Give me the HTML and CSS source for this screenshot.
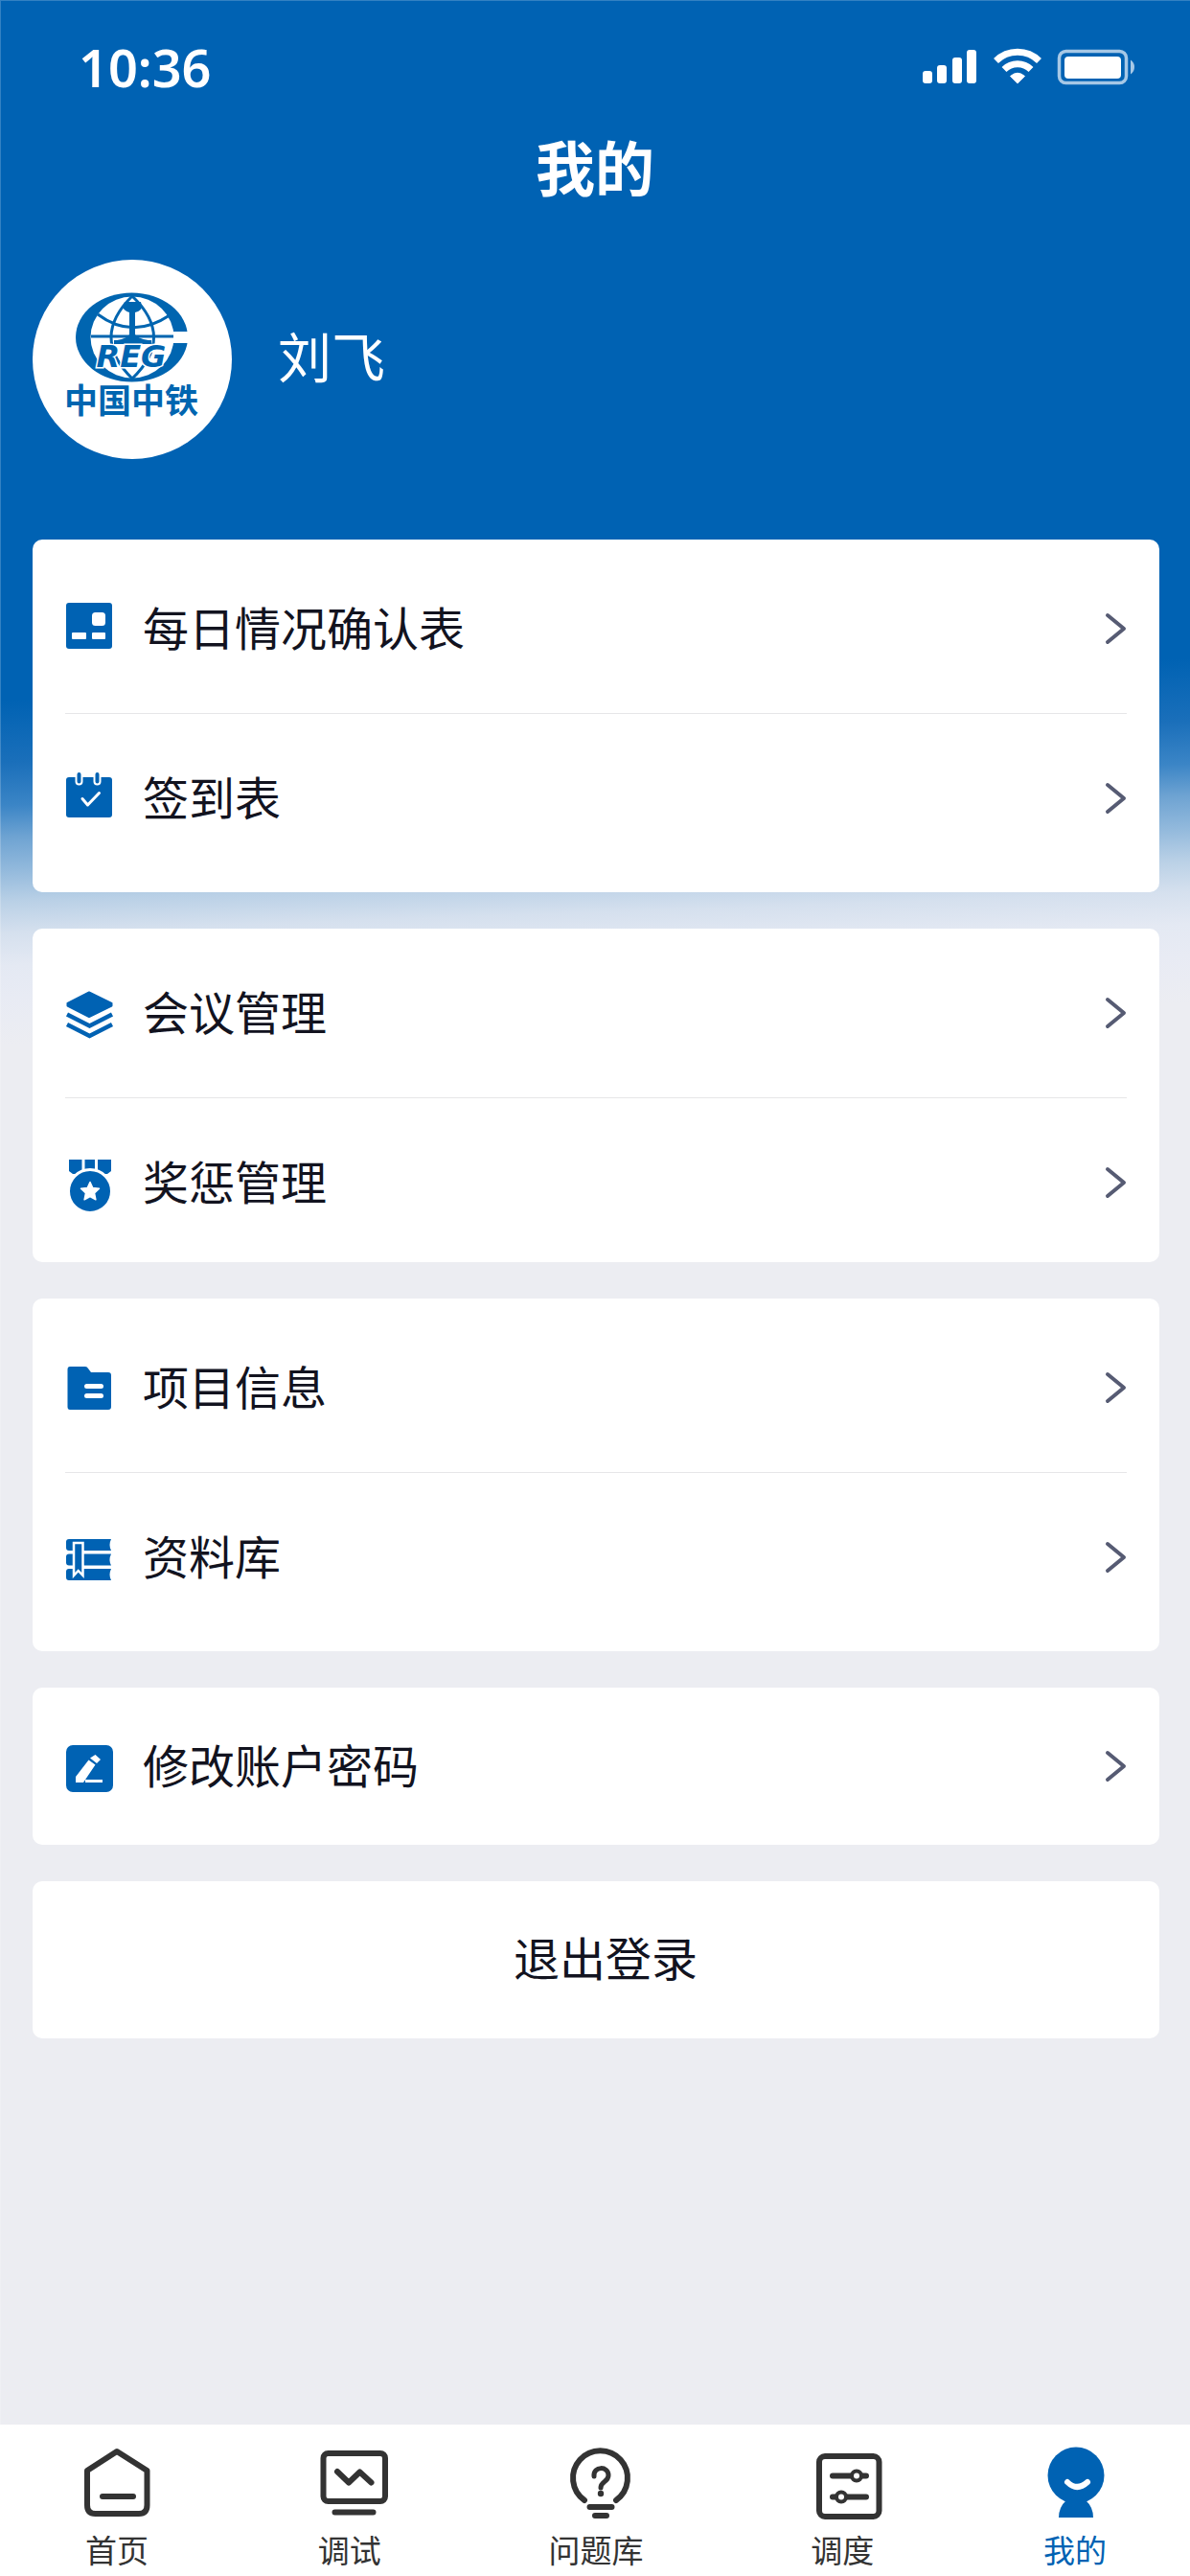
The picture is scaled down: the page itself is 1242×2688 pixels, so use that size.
FILE: index.html
```html
<!DOCTYPE html>
<html lang="zh-CN">
<head>
<meta charset="utf-8">
<meta name="viewport" content="width=device-width, initial-scale=1">
<title>我的</title>
<link rel="stylesheet" href="styles.css">
</head>
<body>
<div class="page">
  <div class="status">
    <span class="status__time">10:36</span>
    <svg class="status__icons" viewBox="0 0 222 38" aria-hidden="true">
      <g fill="#fff">
        <rect x="0" y="23" width="10" height="13" rx="3"/>
        <rect x="15" y="17" width="10" height="19" rx="3"/>
        <rect x="31" y="9" width="10" height="27" rx="3"/>
        <rect x="46" y="1" width="10" height="35" rx="3"/>
        <path d="M99 36L91.500 28.500Q99 22 106.500 28.500Z" stroke="#fff" stroke-width="1" stroke-linejoin="round"/>
        <rect x="148" y="8" width="59" height="23" rx="4"/>
      </g>
      <g fill="none" stroke="#fff" stroke-width="7">
        <path d="M76.500 12.500A32 32 0 0 1 121.500 12.500"/>
        <path d="M85 21.500A20 20 0 0 1 113 21.500"/>
      </g>
      <rect x="142.500" y="2.500" width="70" height="33" rx="7" fill="none" stroke="#a6c8e6" stroke-width="3.500"/>
      <path d="M217 11.500Q221 14 221 19T217 26.500Z" fill="#a6c8e6"/>
    </svg>
  </div>
  <h1 class="title">我的</h1>

  <section class="profile">
    <svg class="profile__avatar" viewBox="0 0 208 208" role="img" aria-label="中国中铁">
      <circle cx="104" cy="104" r="104" fill="#fff"/>
      <ellipse cx="103.500" cy="81" rx="58.500" ry="46.500" fill="#0065b0"/>
      <ellipse cx="104" cy="81" rx="43.500" ry="42.500" fill="#fff"/>
      <rect x="146" y="75" width="20" height="12" fill="#fff"/>
      <g fill="none" stroke="#0065b0" stroke-width="3">
        <path d="M61 80H147"/>
        <path d="M104 38Q60 81 104 124Q149 81 104 38"/>
        <path d="M68 57Q104 84 143 58"/>
      </g>
      <path d="M96 44H113L114 49Q114 53 107 55V78Q109 82 121 84H124V88H85V84H88Q99 82 101 78V55Q95 53 94 49Z" fill="#0065b0"/>
      <text class="logo-mark" x="103" y="112" text-anchor="middle">REG</text>
      <text class="logo-name" x="103" y="160" text-anchor="middle">中国中铁</text>
    </svg>
    <p class="profile__name">刘飞</p>
  </section>

  <main class="cards">
    <nav class="menu menu--roomy">
      <a class="row" href="#daily">
        <svg class="row__icon" viewBox="0 0 50 54" aria-hidden="true">
          <rect x="1" y="0" width="48" height="48" rx="3" fill="#0062b3"/>
          <g fill="#fff"><rect x="28" y="10" width="14" height="14" rx="3.500"/><rect x="7" y="31" width="15" height="7" rx="1"/><rect x="28" y="31" width="14" height="7" rx="1"/></g>
        </svg>
        <span class="row__label">每日情况确认表</span>
        <svg class="row__arrow" viewBox="0 0 24 36" aria-hidden="true"><path d="M4 4L21 18L4 32"/></svg>
      </a>
      <a class="row" href="#sign">
        <svg class="row__icon" viewBox="0 0 50 54" aria-hidden="true">
          <rect x="1" y="5" width="48" height="42" rx="3" fill="#0062b3"/>
          <g fill="#0062b3" stroke="#fff" stroke-width="2"><rect x="11.500" y="-1" width="6" height="13.500" rx="3"/><rect x="30.500" y="-1" width="6" height="13.500" rx="3"/></g>
          <path d="M18 27.500L23.500 34L35.500 21.500" fill="none" stroke="#fff" stroke-width="3" stroke-linecap="round" stroke-linejoin="round"/>
        </svg>
        <span class="row__label">签到表</span>
        <svg class="row__arrow" viewBox="0 0 24 36" aria-hidden="true"><path d="M4 4L21 18L4 32"/></svg>
      </a>
    </nav>

    <nav class="menu menu--compact">
      <a class="row" href="#meeting">
        <svg class="row__icon" viewBox="0 0 50 54" aria-hidden="true">
          <path d="M25 5.500L48.500 17V19.500L25 31L2.500 19.500V17Z" fill="#0062b3" stroke="#0062b3" stroke-width="2" stroke-linejoin="round"/>
          <g fill="none" stroke="#0062b3" stroke-width="4.500"><path d="M2 28.500L25.500 40.500L49 28.500"/><path d="M2 39L25.500 51L49 39"/></g>
        </svg>
        <span class="row__label">会议管理</span>
        <svg class="row__arrow" viewBox="0 0 24 36" aria-hidden="true"><path d="M4 4L21 18L4 32"/></svg>
      </a>
      <a class="row" href="#award">
        <svg class="row__icon" viewBox="0 0 50 54" aria-hidden="true">
          <path d="M4 3H17.500V18H8L4 15ZM20.500 3H31V14H20.500ZM34 3H48V15L44 18H34Z" fill="#0062b3"/>
          <circle cx="26" cy="36" r="22.500" fill="#0062b3" stroke="#fff" stroke-width="3"/>
          <path d="M26 26.500L28.800 32.500L35.500 33.200L30.500 38L31.900 44.800L26 41.500L20.100 44.800L21.500 38L16.500 33.200L23.200 32.500Z" fill="#fff" stroke="#fff" stroke-width="1.500" stroke-linejoin="round"/>
        </svg>
        <span class="row__label">奖惩管理</span>
        <svg class="row__arrow" viewBox="0 0 24 36" aria-hidden="true"><path d="M4 4L21 18L4 32"/></svg>
      </a>
    </nav>

    <nav class="menu menu--roomy">
      <a class="row" href="#project">
        <svg class="row__icon" viewBox="0 0 50 54" aria-hidden="true">
          <path d="M5 5H21Q23 5 24 7L27 11H45Q48 11 48 14V47Q48 50 45 50H5Q2.500 50 2.500 47V8Q2.500 5 5 5Z" fill="#0062b3"/>
          <g fill="#fff"><rect x="20" y="23" width="20" height="5" rx="2.500"/><rect x="20" y="33" width="20" height="5" rx="2.500"/></g>
        </svg>
        <span class="row__label">项目信息</span>
        <svg class="row__arrow" viewBox="0 0 24 36" aria-hidden="true"><path d="M4 4L21 18L4 32"/></svg>
      </a>
      <a class="row" href="#library">
        <svg class="row__icon" viewBox="0 0 50 54" aria-hidden="true">
          <g fill="#0062b3"><path d="M4 8H48Q45 14 48 20H4Q1 20 1 17V11Q1 8 4 8Z"/><path d="M4 23.500H48Q45 29.500 48 35.500H4Q1 35.500 1 32.500V26.500Q1 23.500 4 23.500Z"/><path d="M4 39H48Q45 45 48 51H4Q1 51 1 48V42Q1 39 4 39Z"/></g>
          <path d="M9 12H18.500V46L13.700 41L9 46Z" fill="#0062b3" stroke="#fff" stroke-width="2.500"/>
        </svg>
        <span class="row__label">资料库</span>
        <svg class="row__arrow" viewBox="0 0 24 36" aria-hidden="true"><path d="M4 4L21 18L4 32"/></svg>
      </a>
    </nav>

    <nav class="menu menu--single">
      <a class="row" href="#password">
        <svg class="row__icon" viewBox="0 0 50 54" aria-hidden="true">
          <rect x="1" y="5" width="49" height="49" rx="7" fill="#0062b3"/>
          <path d="M11 44V38L24.500 20.500L31.500 25.500L19 44ZM26 18.500L31.500 15L37 20L33 24Z" fill="#fff"/>
          <rect x="21" y="41" width="18" height="3" fill="#fff"/>
        </svg>
        <span class="row__label">修改账户密码</span>
        <svg class="row__arrow" viewBox="0 0 24 36" aria-hidden="true"><path d="M4 4L21 18L4 32"/></svg>
      </a>
    </nav>

    <button class="logout" type="button">退出登录</button>
  </main>

  <nav class="tabs" aria-label="主导航">
    <a class="tab" href="#home">
      <svg class="tab__icon" viewBox="0 0 70 74" aria-hidden="true">
        <path d="M35 6L66.500 26V62Q66.500 71 58 71H12.500Q4 71 4 62V26Z"/><path d="M20 53H52"/>
      </svg>
      <span>首页</span>
    </a>
    <a class="tab" href="#debug">
      <svg class="tab__icon" viewBox="0 0 70 74" aria-hidden="true">
        <rect x="7.500" y="8" width="64.500" height="50" rx="5"/><path d="M19.500 69.500H59.500M22 27L34 38.500L45.500 27.500L57.500 38.500"/>
      </svg>
      <span>调试</span>
    </a>
    <a class="tab" href="#issues">
      <svg class="tab__icon" viewBox="0 0 70 74" aria-hidden="true">
        <path d="M23 57A28.500 28.500 0 1 1 56 57M28.500 64H51.500M34 73H46"/>
        <path d="M33 32C32 21 48 21 48 31C48 38 40 37 40 44" stroke-width="5"/><circle cx="40" cy="50" r="3.200" fill="#333" stroke="none"/>
      </svg>
      <span>问题库</span>
    </a>
    <a class="tab" href="#dispatch">
      <svg class="tab__icon" viewBox="0 0 70 74" aria-hidden="true">
        <rect x="11" y="11" width="62.500" height="63" rx="6"/><path d="M25 31.500H60M25 53.500H60"/>
        <g fill="#fff" stroke-width="4"><circle cx="50" cy="31.500" r="5"/><circle cx="34" cy="53.500" r="5"/></g>
      </svg>
      <span>调度</span>
    </a>
    <a class="tab tab--active" href="#me" aria-current="page">
      <svg class="tab__icon" viewBox="0 0 70 74" aria-hidden="true">
        <g fill="#0062b3" stroke="none"><circle cx="36" cy="31" r="29.500"/><path d="M26 57Q18 64 18 75H54Q54 64 46 57Z"/></g>
        <path d="M27 38Q37 48 48 38" stroke="#fff"/>
      </svg>
      <span>我的</span>
    </a>
  </nav>
</div>
</body>
</html>
```
FILE: styles.css
```css
* {
  box-sizing: border-box;
}

body {
  margin: 0;
  font-family: "Noto Sans CJK SC", sans-serif;
  color: #12131f;
}

svg {
  display: block;
  overflow: visible;
}

a {
  color: inherit;
  text-decoration: none;
}

.page {
  display: flex;
  flex-direction: column;
  min-height: 100vh;
  background: #ecedf2 linear-gradient(178deg, #0062b3 730px, #1a6fba 795px, #3b85c6 840px, #6ea3d2 873px, #92b9dc 907px, #b9d0e6 940px, #d5e0ee 973px, #e4e9f3 1007px, #e8ebf4 1040px, #ecedf2 1090px) no-repeat 0 0 / 100% 1200px;
  box-shadow: inset 1px 1px 0 rgba(255, 255, 255, 0.2);
}

.status {
  display: flex;
  align-items: center;
  justify-content: space-between;
  height: 140px;
  padding: 0 57px 0 82px;
  color: #fff;
}

.status__time {
  font: 600 54px/72px "Noto Sans", sans-serif;
}

.status__icons {
  width: 222px;
  height: 38px;
}

.title {
  margin: 0;
  padding-bottom: 8px;
  font-size: 62px;
  font-weight: 700;
  line-height: 66px;
  text-align: center;
  color: #fff;
}

.profile {
  display: flex;
  align-items: center;
  gap: 48px;
  padding: 57px 34px 0;
}

.profile__avatar {
  width: 208px;
  height: 208px;
}

.profile__name {
  margin: 0;
  padding-bottom: 10px;
  font-size: 56px;
  line-height: 80px;
  color: #fff;
}

.logo-mark {
  font: italic bold 32px "DejaVu Sans", sans-serif;
  fill: #0065b0;
  stroke: #fff;
  stroke-width: 3px;
  paint-order: stroke;
}

.logo-name {
  font-size: 35px;
  font-weight: 700;
  fill: #0065b0;
}

.cards {
  display: flex;
  flex-direction: column;
  gap: 38px;
  flex: 1;
  padding: 84px 32px 40px 34px;
}

.menu,
.logout {
  border-radius: 10px;
  background: #fff;
}

.menu {
  padding: 0 34px;
}

.menu--roomy {
  padding-top: 5px;
  padding-bottom: 11px;
}

.row {
  display: flex;
  align-items: center;
  height: 176px;
  font-size: 48px;
  line-height: 70px;
}

.row + .row {
  border-top: 1px solid #e6e6e8;
}

.menu--compact .row + .row {
  height: 172px;
  padding-top: 4px;
}

.menu--single .row {
  height: 164px;
}

.row__icon {
  flex: none;
  width: 50px;
  height: 54px;
  margin-right: 31px;
}

.row__label {
  flex: 1;
  padding-bottom: 6px;
}

.row__arrow {
  flex: none;
  width: 24px;
  height: 36px;
  fill: none;
  stroke: #565b73;
  stroke-width: 4px;
  stroke-linecap: round;
  stroke-linejoin: round;
}

.logout {
  height: 164px;
  padding: 0 0 8px 20px;
  border: 0;
  font: inherit;
  font-size: 48px;
  color: inherit;
}

.tabs {
  display: flex;
  justify-content: space-between;
  padding: 22px 85px 8px 87px;
  background: #fff;
}

.tab {
  display: flex;
  flex-direction: column;
  align-items: center;
  gap: 14px;
  font-size: 33px;
  line-height: 40px;
  color: #333;
}

.tab--active {
  color: #0062b3;
}

.tab__icon {
  width: 70px;
  height: 74px;
  fill: none;
  stroke: #333;
  stroke-width: 6px;
  stroke-linecap: round;
  stroke-linejoin: round;
}
```
